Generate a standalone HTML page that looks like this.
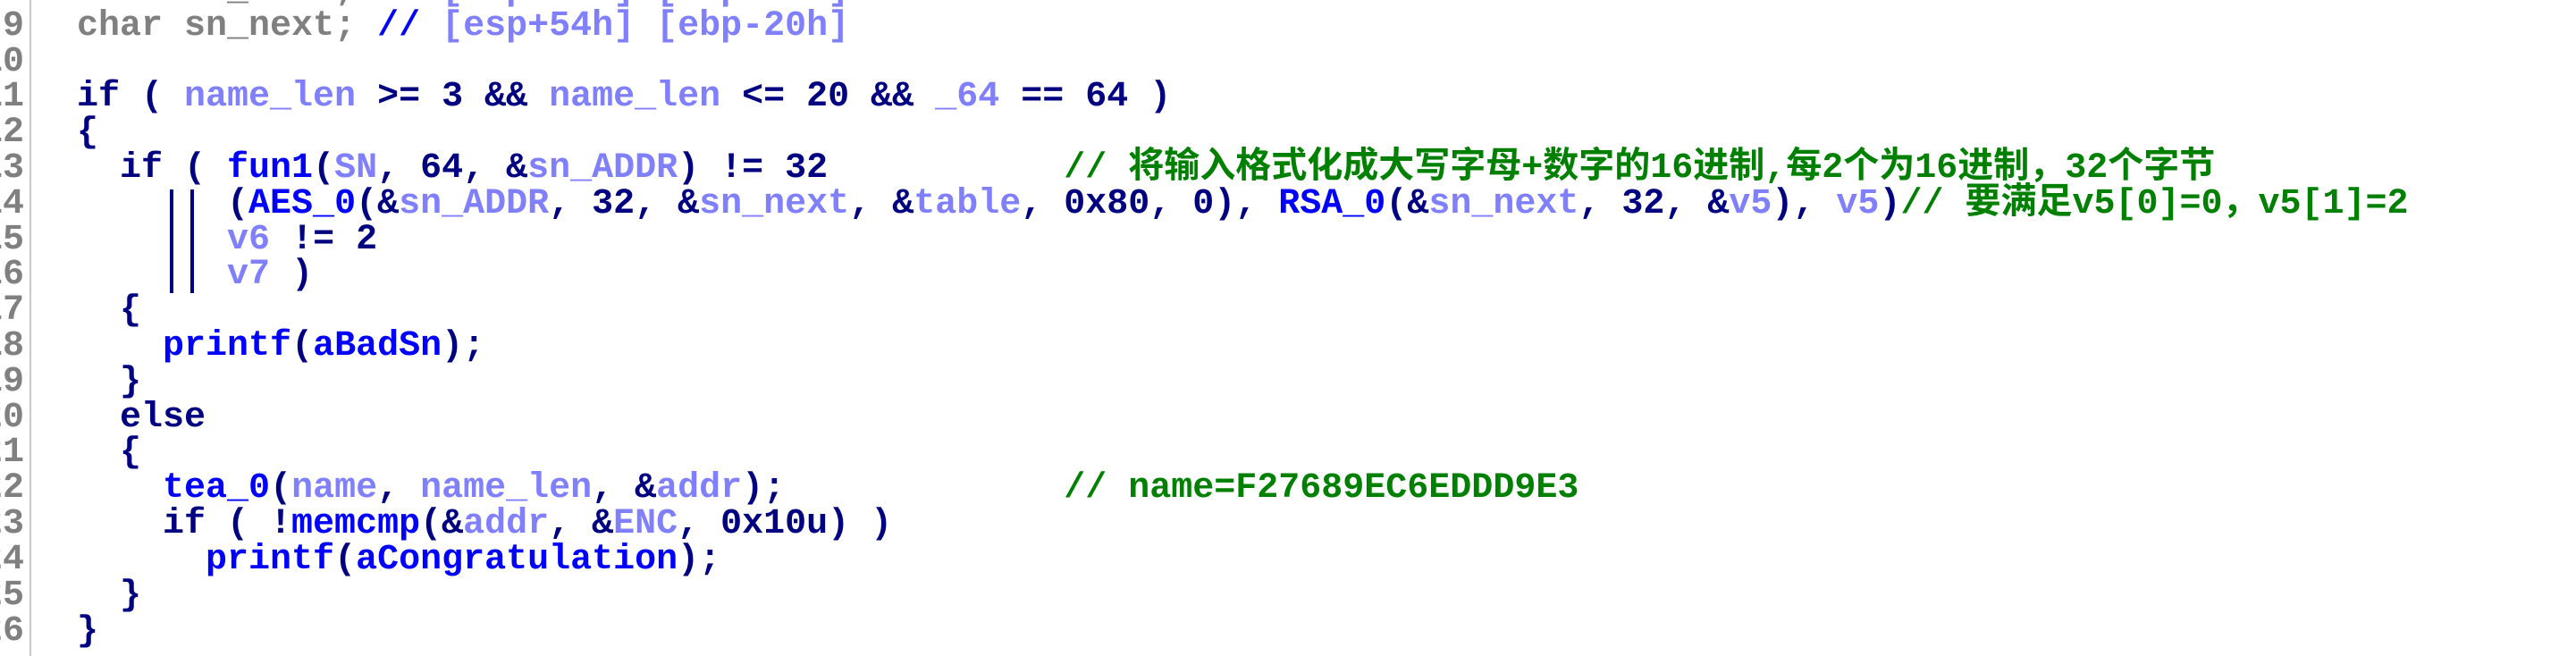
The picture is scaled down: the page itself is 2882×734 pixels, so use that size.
<!DOCTYPE html>
<html><head><meta charset="utf-8"><style>
html,body{margin:0;padding:0;background:#fff;width:2882px;height:734px;overflow:hidden;position:relative}
.l{position:absolute;left:38px;white-space:pre;font:bold 40px/40px "Liberation Mono","Noto Sans CJK SC",monospace;color:#000080;height:40px}
.n{position:absolute;left:-60px;width:87px;text-align:right;white-space:pre;font:bold 40px/40px "Liberation Mono",monospace;color:#808080}
.k{color:#000080}.v{color:#8080ff}.f{color:#0000ff}.c{color:#008000}.g{color:#808080}.b{color:#0000ff}
.gut{position:absolute;left:33px;top:0;width:2px;height:734px;background:#c8c8c8}
.bar{position:absolute;width:4px;background:#000080;top:212px;height:116px}
</style></head><body>
<div class="gut"></div>
<div class="n" style="top:-30px">8</div>
<div class="n" style="top:10px">9</div>
<div class="n" style="top:50px">10</div>
<div class="n" style="top:89px">11</div>
<div class="n" style="top:129px">12</div>
<div class="n" style="top:169px">13</div>
<div class="n" style="top:209px">14</div>
<div class="n" style="top:249px">15</div>
<div class="n" style="top:288px">16</div>
<div class="n" style="top:328px">17</div>
<div class="n" style="top:368px">18</div>
<div class="n" style="top:408px">19</div>
<div class="n" style="top:448px">20</div>
<div class="n" style="top:487px">21</div>
<div class="n" style="top:527px">22</div>
<div class="n" style="top:567px">23</div>
<div class="n" style="top:607px">24</div>
<div class="n" style="top:647px">25</div>
<div class="n" style="top:687px">26</div>

<div class="l" style="top:-30px"><span class="g">  char sn_ADDR; </span><span class="b">//</span><span class="v"> [esp+14h] [ebp-60h]</span></div>
<div class="l" style="top:10px"><span class="g">  char sn_next; </span><span class="b">//</span><span class="v"> [esp+54h] [ebp-20h]</span></div>
<div class="l" style="top:89px">  if ( <span class="v">name_len</span> &gt;= 3 &amp;&amp; <span class="v">name_len</span> &lt;= 20 &amp;&amp; <span class="v">_64</span> == 64 )</div>
<div class="l" style="top:129px">  {</div>
<div class="l" style="top:169px">    if ( <span class="f">fun1</span>(<span class="v">SN</span>, 64, &amp;<span class="v">sn_ADDR</span>) != 32           <span class="c">// 将输入格式化成大写字母+数字的16进制,每2个为16进制，32个字节</span></div>
<div class="l" style="top:209px">         (<span class="f">AES_0</span>(&amp;<span class="v">sn_ADDR</span>, 32, &amp;<span class="v">sn_next</span>, &amp;<span class="v">table</span>, 0x80, 0), <span class="f">RSA_0</span>(&amp;<span class="v">sn_next</span>, 32, &amp;<span class="v">v5</span>), <span class="v">v5</span>)<span class="c">// 要满足v5[0]=0，v5[1]=2</span></div>
<div class="l" style="top:249px">         <span class="v">v6</span> != 2</div>
<div class="l" style="top:288px">         <span class="v">v7</span> )</div>
<div class="bar" style="left:190px"></div>
<div class="bar" style="left:213px"></div>
<div class="l" style="top:328px">    {</div>
<div class="l" style="top:368px">      <span class="f">printf</span>(<span class="f">aBadSn</span>);</div>
<div class="l" style="top:408px">    }</div>
<div class="l" style="top:448px">    else</div>
<div class="l" style="top:487px">    {</div>
<div class="l" style="top:527px">      <span class="f">tea_0</span>(<span class="v">name</span>, <span class="v">name_len</span>, &amp;<span class="v">addr</span>);             <span class="c">// name=F27689EC6EDDD9E3</span></div>
<div class="l" style="top:567px">      if ( !<span class="f">memcmp</span>(&amp;<span class="v">addr</span>, &amp;<span class="v">ENC</span>, 0x10u) )</div>
<div class="l" style="top:607px">        <span class="f">printf</span>(<span class="f">aCongratulation</span>);</div>
<div class="l" style="top:647px">    }</div>
<div class="l" style="top:687px">  }</div>
</body></html>
